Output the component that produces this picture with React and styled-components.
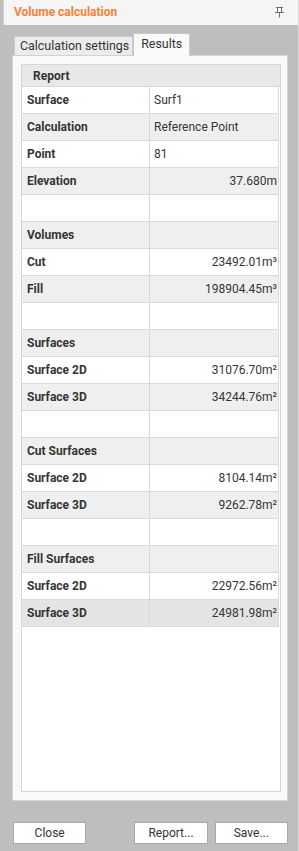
import React from "react";
import styled, { createGlobalStyle } from "styled-components";

const GlobalStyle = createGlobalStyle`
  html, body {
    margin: 0;
    padding: 0;
    background: #bebebe;
  }
  * {
    box-sizing: border-box;
  }
`;

const Window = styled.div`
  width: 299px;
  height: 851px;
  background-color: #bebebe;
  display: flex;
  flex-direction: column;
  font-family: Roboto, "Liberation Sans", sans-serif;
  color: #353535;
  border-right: 1px solid #d8d8d8;
`;

const Header = styled.div`
  height: 25px;
  margin-left: 3px;
  border-left: 1px solid #cfcfcf;
  background-color: #f5f5f5;
  display: flex;
  align-items: center;
  justify-content: space-between;
  padding: 0 14px 1px 10px;
`;

const Title = styled.span`
  color: #f7813a;
  font-size: 12px;
  font-weight: 700;
`;

const Body = styled.div`
  flex: 1;
  display: flex;
  flex-direction: column;
  padding: 8px 10px 7px 12px;
`;

const TabBar = styled.div`
  height: 22px;
  display: flex;
  align-items: flex-end;
  padding-left: 2px;
  position: relative;
  z-index: 1;
`;

const Tab = styled.div`
  height: ${({ active }) => (active ? "23px" : "19px")};
  margin-bottom: ${({ active }) => (active ? "-1px" : "0")};
  padding: ${({ active }) => (active ? "1px 7px 0 7px" : "0 3px 0 5px")};
  background-color: ${({ active }) => (active ? "#f9f9f9" : "#ececec")};
  border: 1px solid #c9c9c9;
  border-bottom: none;
  font-size: 12.4px;
  color: #333;
  display: flex;
  align-items: ${({ active }) => (active ? "flex-start" : "center")};
  line-height: 18px;
`;

const Panel = styled.div`
  height: 746px;
  background-color: #f9f9f9;
  border: 1px solid #d2d2d2;
  padding: 8px 6px 8px 8px;
  display: flex;
`;

const Frame = styled.div`
  flex: 1;
  background-color: #fff;
  border: 1px solid #d6d6d6;
  display: flex;
  flex-direction: column;
`;

const ReportHead = styled.div`
  height: 22px;
  background-color: #e8e8e8;
  border-bottom: 1px solid #d6d6d6;
  font-size: 12px;
  font-weight: 700;
  padding-left: 11px;
  display: flex;
  align-items: center;
`;

const Rows = styled.div`
  width: 257px;
  display: flex;
  flex-direction: column;
`;

const Row = styled.div`
  display: grid;
  grid-template-columns: 128px 129px;
  height: 27px;
  border-bottom: 1px solid #d9d9d9;
  border-right: 1px solid #d9d9d9;
  background-color: ${({ tone }) =>
    tone === "dark" ? "#e4e4e4" : tone === "gray" ? "#efefef" : "#fff"};
`;

const Label = styled.div`
  font-size: 12px;
  font-weight: 700;
  padding-left: 5px;
  display: flex;
  align-items: center;
  border-right: 1px solid #d9d9d9;
`;

const Value = styled.div`
  font-size: 12px;
  padding: 0 2px 0 4px;
  display: flex;
  align-items: center;
  justify-content: ${({ right }) => (right ? "flex-end" : "flex-start")};
`;

const Footer = styled.div`
  margin-top: 21px;
  display: flex;
  gap: 7px;
  padding-left: 1px;
`;

const Button = styled.button`
  width: 74px;
  height: 22px;
  background-color: #fff;
  border: 1px solid #a9a9a9;
  font-family: Roboto, "Liberation Sans", sans-serif;
  font-size: 12px;
  color: #333;
  padding: 0;
  margin-right: ${({ spaced }) => (spaced ? "41px" : "0")};
`;

const PinIcon = () => (
  <svg width="9" height="11" viewBox="0 0 9 11" fill="none" stroke="#6f6f6f" strokeWidth="1">
    <path d="M1 0.5h7M2.5 0.5v5M6.5 0.5v5M0 5.5h9M4.5 5.5v5" />
  </svg>
);

const rows = [
  ["Surface", "Surf1"],
  ["Calculation", "Reference Point"],
  ["Point", "81"],
  ["Elevation", "37.680m", true],
  ["", ""],
  ["Volumes", ""],
  ["Cut", "23492.01m³", true],
  ["Fill", "198904.45m³", true],
  ["", ""],
  ["Surfaces", ""],
  ["Surface 2D", "31076.70m²", true],
  ["Surface 3D", "34244.76m²", true],
  ["", ""],
  ["Cut Surfaces", ""],
  ["Surface 2D", "8104.14m²", true],
  ["Surface 3D", "9262.78m²", true],
  ["", ""],
  ["Fill Surfaces", ""],
  ["Surface 2D", "22972.56m²", true],
  ["Surface 3D", "24981.98m²", true],
];

const App = () => (
  <Window>
    <GlobalStyle />
    <Header>
      <Title>Volume calculation</Title>
      <PinIcon />
    </Header>
    <Body>
      <TabBar>
        <Tab>Calculation settings</Tab>
        <Tab active>Results</Tab>
      </TabBar>
      <Panel>
        <Frame>
          <ReportHead>Report</ReportHead>
          <Rows>
            {rows.map(([label, value, right], i) => (
              <Row
                key={i}
                tone={i === rows.length - 1 ? "dark" : i % 2 === 1 ? "gray" : "white"}
              >
                <Label>{label}</Label>
                <Value right={right}>{value}</Value>
              </Row>
            ))}
          </Rows>
        </Frame>
      </Panel>
      <Footer>
        <Button spaced>Close</Button>
        <Button>Report...</Button>
        <Button>Save...</Button>
      </Footer>
    </Body>
  </Window>
);

export default App;
